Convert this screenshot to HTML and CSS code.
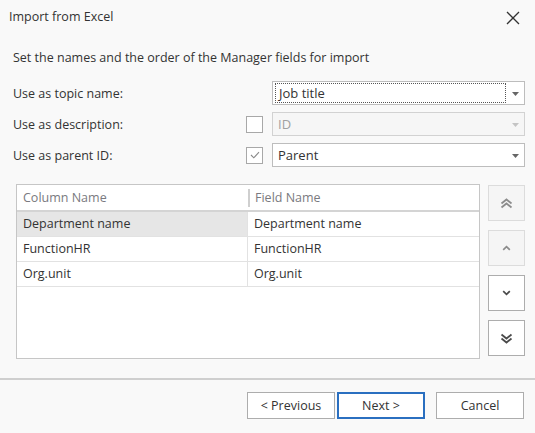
FILE: index.html
```html
<!DOCTYPE html>
<html>
<head>
<meta charset="utf-8">
<link rel="stylesheet" href="styles.css">
</head>
<body>
<div class="dialog">
  <div class="titlebar">
    <span class="title">Import from Excel</span>
    <svg class="close" width="14" height="14" viewBox="0 0 14 14"><path d="M1 1 L13 13 M13 1 L1 13" stroke="#333" stroke-width="1.3" fill="none"/></svg>
  </div>
  <div class="intro">Set the names and the order of the Manager fields for import</div>
  <div class="form">
    <div class="row">
      <span class="label">Use as topic name:</span>
      <span class="checkcell"></span>
      <div class="combo">
        <span class="focus">Job title</span>
        <svg class="arrow" width="7" height="4" viewBox="0 0 7 4"><path d="M0 0 H7 L3.5 4 Z" fill="#666"/></svg>
      </div>
    </div>
    <div class="row">
      <span class="label">Use as description:</span>
      <span class="checkcell"><span class="check"></span></span>
      <div class="combo disabled">
        <span class="value">ID</span>
        <svg class="arrow" width="7" height="4" viewBox="0 0 7 4"><path d="M0 0 H7 L3.5 4 Z" fill="#c4c4c4"/></svg>
      </div>
    </div>
    <div class="row">
      <span class="label">Use as parent ID:</span>
      <span class="checkcell"><span class="check"><svg width="10" height="8" viewBox="0 0 10 8"><path d="M1 4 L3.8 6.8 L9 1.2" stroke="#8a8a8a" stroke-width="1.1" fill="none"/></svg></span></span>
      <div class="combo">
        <span class="value">Parent</span>
        <svg class="arrow" width="7" height="4" viewBox="0 0 7 4"><path d="M0 0 H7 L3.5 4 Z" fill="#666"/></svg>
      </div>
    </div>
  </div>
  <div class="gridarea">
    <div class="table">
      <div class="thead">
        <div class="th c1">Column Name</div>
        <div class="th c2"><span class="sep"></span>Field Name</div>
      </div>
      <div class="tr">
        <div class="td c1 sel">Department name</div>
        <div class="td c2">Department name</div>
      </div>
      <div class="tr">
        <div class="td c1">FunctionHR</div>
        <div class="td c2">FunctionHR</div>
      </div>
      <div class="tr">
        <div class="td c1">Org.unit</div>
        <div class="td c2">Org.unit</div>
      </div>
    </div>
    <div class="movers">
      <div class="mbtn off"><svg width="13" height="11" viewBox="0 0 13 11"><path d="M1.5 5.5 L6.5 1.5 L11.5 5.5 M1.5 9.5 L6.5 5.5 L11.5 9.5" stroke="#8c8c8c" stroke-width="1.8" fill="none"/></svg></div>
      <div class="mbtn off"><svg width="9" height="6" viewBox="0 0 9 6"><path d="M1.2 4.8 L4.5 1.6 L7.8 4.8" stroke="#8c8c8c" stroke-width="1.7" fill="none"/></svg></div>
      <div class="mbtn"><svg width="9" height="6" viewBox="0 0 9 6"><path d="M1.2 1.2 L4.5 4.4 L7.8 1.2" stroke="#4a4a4a" stroke-width="1.7" fill="none"/></svg></div>
      <div class="mbtn"><svg width="13" height="11" viewBox="0 0 13 11"><path d="M1.5 1.5 L6.5 5.5 L11.5 1.5 M1.5 5.5 L6.5 9.5 L11.5 5.5" stroke="#4a4a4a" stroke-width="1.8" fill="none"/></svg></div>
    </div>
  </div>
  <div class="footer">
    <button class="btn">&lt; Previous</button>
    <button class="btn primary">Next &gt;</button>
    <button class="btn cancel">Cancel</button>
  </div>
</div>
</body>
</html>
```
FILE: styles.css
```css
html, body {
  margin: 0;
  padding: 0;
  background: #f9f9f9;
}
body {
  font-family: "Open Sans", "Noto Sans", sans-serif;
  font-size: 12.5px;
  color: #333;
}
.dialog {
  width: 535px;
  height: 433px;
  overflow: hidden;
}
.titlebar {
  height: 34px;
  display: flex;
  align-items: center;
  justify-content: space-between;
  padding: 0 15px 0 9px;
}
.title {
  line-height: 16px;
}
.close {
  display: block;
  margin-top: 1px;
}
.intro {
  height: 40px;
  box-sizing: border-box;
  padding: 16px 0 0 13px;
  line-height: 16px;
}
.form {
  padding: 7px 0 0 13px;
  display: flex;
  flex-direction: column;
  gap: 7px;
}
.row {
  display: flex;
  align-items: center;
  height: 24px;
}
.label {
  width: 233px;
}
.checkcell {
  width: 26px;
  display: flex;
  align-items: center;
}
.check {
  width: 15px;
  height: 15px;
  border: 1px solid #a8a8a8;
  background: #fff;
  display: flex;
  align-items: center;
  justify-content: center;
}
.combo {
  width: 253px;
  height: 24px;
  box-sizing: border-box;
  border: 1px solid #bdbdbd;
  background: #fff;
  display: flex;
  align-items: center;
  position: relative;
  font-size: 13px;
}
.combo .focus {
  width: 231px;
  height: 20px;
  box-sizing: border-box;
  margin-left: 2px;
  border: 1px dotted #555;
  padding-left: 3px;
  line-height: 18px;
}
.combo .value {
  padding-left: 5px;
  flex: 1;
}
.combo .arrow {
  position: absolute;
  right: 5px;
  top: 10px;
}
.combo.disabled {
  background: #f6f6f6;
  border-color: #d2d2d2;
}
.combo.disabled .value {
  color: #a0a0a0;
}
.gridarea {
  margin: 17px 0 0 16px;
  display: flex;
  gap: 8px;
  height: 175px;
}
.table {
  width: 464px;
  height: 175px;
  box-sizing: border-box;
  border: 1px solid #c6c6c6;
  background: #fff;
}
.thead {
  display: flex;
  height: 27px;
  box-sizing: border-box;
  border-bottom: 2px solid #d4d4d4;
}
.th {
  color: #7a7a80;
  line-height: 25px;
  padding-left: 6px;
  box-sizing: border-box;
  position: relative;
}
.c1 {
  width: 231px;
}
.c2 {
  flex: 1;
}
.sep {
  position: absolute;
  left: 0;
  top: 4px;
  width: 2px;
  height: 18px;
  background: #cfcfcf;
}
.th.c2 {
  padding-left: 7px;
}
.tr {
  display: flex;
  height: 25px;
  box-sizing: border-box;
  border-bottom: 1px solid #e2e2e2;
}
.td {
  line-height: 24px;
  padding-left: 6px;
  box-sizing: border-box;
}
.td.c1 {
  border-right: 1px solid #e2e2e2;
}
.td.sel {
  background: #e6e6e6;
}
.movers {
  display: flex;
  flex-direction: column;
  gap: 9px;
  margin-top: 1px;
}
.mbtn {
  width: 37px;
  height: 36px;
  box-sizing: border-box;
  border: 1px solid #adadad;
  background: #fff;
  display: flex;
  align-items: center;
  justify-content: center;
}
.mbtn.off {
  border-color: #dcdcdc;
  background: #f5f5f5;
}
.footer {
  margin-top: 19px;
  border-top: 2px solid #cfcfcf;
  padding: 12px 0 0 247px;
  display: flex;
}
.btn {
  width: 88px;
  height: 27px;
  box-sizing: border-box;
  border: 1px solid #adadad;
  background: #fff;
  font-family: "Open Sans", "Noto Sans", sans-serif;
  font-size: 12.5px;
  color: #333;
  padding: 0;
  margin: 0 2px 0 0;
}
.btn.primary {
  border: 2px solid #2a6fc0;
}
.btn.cancel {
  margin-left: 9px;
}
```
